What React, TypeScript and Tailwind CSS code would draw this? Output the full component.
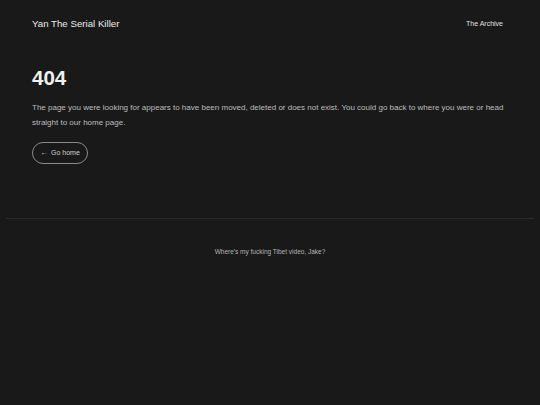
export default function App() {
  return (
    <div
      className="min-h-[405px] w-full bg-[#191919] text-[#e6e6e6]"
      style={{ fontFamily: '"Liberation Sans", Arial, sans-serif' }}
    >
      <header className="flex items-center justify-between px-8 pt-[18px]">
        <a className="text-[9.7px] leading-[12px] text-[#ececec]">Yan The Serial Killer</a>
        <a className="mr-[5px] text-[7px] leading-[10px] text-[#e0e0e0]">The Archive</a>
      </header>

      <main className="px-8 pt-[36px]">
        <h1 className="text-[20.5px] font-bold leading-[24px] text-[#f0f0f0]">404</h1>
        <p className="mt-[11px] text-[8px] leading-[14.5px] text-[#bdbdbd]">
          The page you were looking for appears to have been moved, deleted or does not exist. You could go back to
          where you were or head straight to our home page.
        </p>
        <button className="mt-[12px] flex h-[22px] items-center gap-[3px] rounded-full border border-[#8a8a8a] px-[7px] text-[7px] text-[#d0d0d0]">
          <span className="text-[8px] leading-none">←</span>
          <span>Go home</span>
        </button>
      </main>

      <div className="mx-[6px] mt-[54px] border-t border-[#2a2a2a]" />

      <footer className="pt-[28px] text-center text-[6.5px] leading-[10px] text-[#b5b5b5]">
        Where's my fucking Tibet video, Jake?
      </footer>
    </div>
  );
}
